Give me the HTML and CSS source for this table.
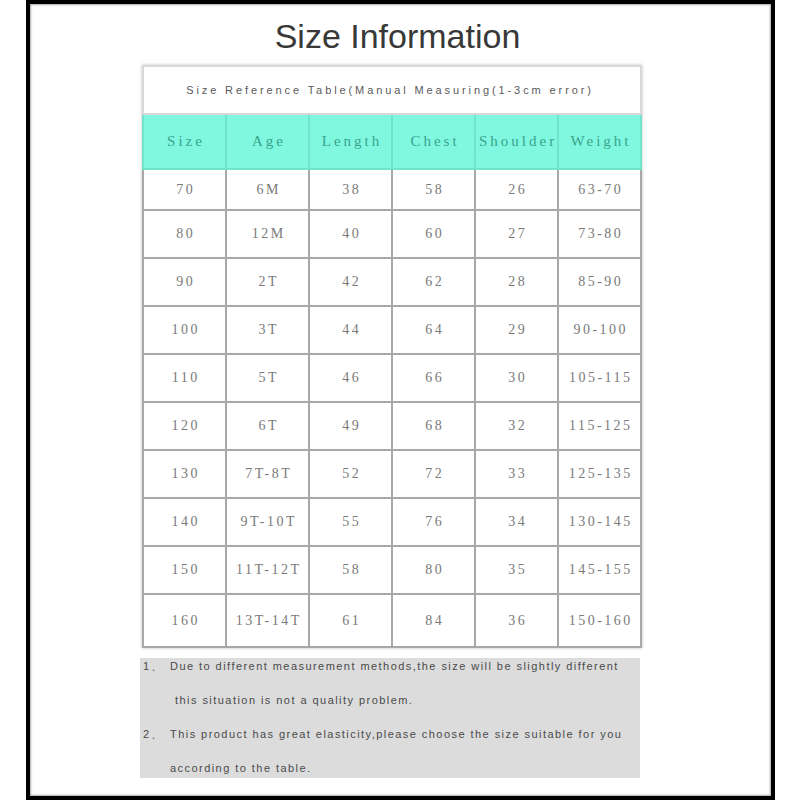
FILE: index.html
```html
<!DOCTYPE html>
<html>
<head>
<meta charset="utf-8">
<link rel="stylesheet" href="styles.css">
</head>
<body>
<div class="frame">
  <h1 class="title">Size Information</h1>
  <table class="size-table">
    <tr class="caption-row"><td colspan="6">Size Reference Table(Manual Measuring(1-3cm error)</td></tr>
    <tr class="head-row">
      <th>Size</th><th>Age</th><th>Length</th><th>Chest</th><th>Shoulder</th><th>Weight</th>
    </tr>
    <tr class="data-row"><td>70</td><td>6M</td><td>38</td><td>58</td><td>26</td><td>63-70</td></tr>
    <tr class="data-row"><td>80</td><td>12M</td><td>40</td><td>60</td><td>27</td><td>73-80</td></tr>
    <tr class="data-row"><td>90</td><td>2T</td><td>42</td><td>62</td><td>28</td><td>85-90</td></tr>
    <tr class="data-row"><td>100</td><td>3T</td><td>44</td><td>64</td><td>29</td><td>90-100</td></tr>
    <tr class="data-row"><td>110</td><td>5T</td><td>46</td><td>66</td><td>30</td><td>105-115</td></tr>
    <tr class="data-row"><td>120</td><td>6T</td><td>49</td><td>68</td><td>32</td><td>115-125</td></tr>
    <tr class="data-row"><td>130</td><td>7T-8T</td><td>52</td><td>72</td><td>33</td><td>125-135</td></tr>
    <tr class="data-row"><td>140</td><td>9T-10T</td><td>55</td><td>76</td><td>34</td><td>130-145</td></tr>
    <tr class="data-row"><td>150</td><td>11T-12T</td><td>58</td><td>80</td><td>35</td><td>145-155</td></tr>
    <tr class="data-row"><td>160</td><td>13T-14T</td><td>61</td><td>84</td><td>36</td><td>150-160</td></tr>
  </table>
  <div class="notes">
    <div class="note-line"><span class="num">1、</span>Due to different measurement methods,the size will be slightly different</div>
    <div class="note-line indent">this situation is not a quality problem.</div>
    <div class="note-line"><span class="num">2、</span>This product has great elasticity,please choose the size suitable for you</div>
    <div class="note-line cont">according to the table.</div>
  </div>
</div>
</body>
</html>
```

FILE: styles.css
```css
html, body {
  margin: 0;
  padding: 0;
  background: #ffffff;
}

.frame {
  box-sizing: border-box;
  width: 749px;
  height: 800px;
  margin-left: 26px;
  border: 4px solid #000;
  box-shadow: inset 0 0 2px 1px #aaa;
  padding-top: 12px;
  font-family: "Liberation Sans", Arial, sans-serif;
}

.title {
  margin: 0;
  font-size: 34px;
  line-height: 40px;
  font-weight: normal;
  color: #383838;
  text-align: center;
  padding-right: 6px;
}

.size-table {
  margin: 9px 0 0 112px;
  width: 500px;
  border-collapse: collapse;
  table-layout: fixed;
  box-shadow: 0 0 3px rgba(0, 0, 0, 0.25);
}

.size-table td,
.size-table th {
  border: 2px solid #a8a8a8;
  padding: 0;
  text-align: center;
}

.caption-row td {
  height: 46px;
  border-color: #d8d8d8;
  font-family: "Liberation Sans", Arial, sans-serif;
  font-size: 11px;
  letter-spacing: 2.9px;
  text-indent: -4px;
  color: #5a5a5a;
}

.head-row th {
  height: 53px;
  background: #80f7df;
  border-color: #6fe3cb;
  border-top-color: #d8d8d8;
  font-family: "Liberation Serif", "Times New Roman", serif;
  font-weight: normal;
  font-size: 15px;
  letter-spacing: 3px;
  text-indent: 3px;
  color: #38a58c;
}

.data-row td {
  height: 46px;
  font-family: "Liberation Serif", "Times New Roman", serif;
  font-size: 14px;
  letter-spacing: 2.5px;
  text-indent: 2.5px;
  color: #7a7a7a;
}

.data-row:nth-child(3) td {
  height: 39px;
}

.data-row:last-child td {
  height: 51px;
}

.notes {
  box-sizing: border-box;
  margin: 10px 0 0 110px;
  width: 500px;
  height: 120px;
  background: #dcdcdc;
  display: flex;
  flex-direction: column;
  gap: 18px;
  color: #4a4a4a;
  font-size: 11px;
  line-height: 16px;
  letter-spacing: 1.45px;
}

.note-line {
  display: flex;
  white-space: nowrap;
}

.num {
  width: 30px;
  padding-left: 3px;
  box-sizing: border-box;
  flex: none;
}

.indent {
  padding-left: 35px;
}

.cont {
  padding-left: 30px;
}
```
